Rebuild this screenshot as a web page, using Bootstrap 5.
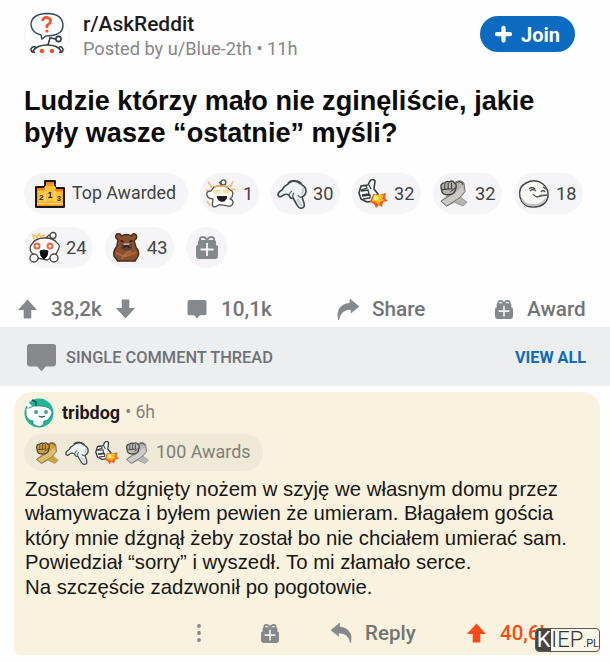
<!DOCTYPE html>
<html lang="pl">
<head>
<meta charset="utf-8">
<meta name="viewport" content="width=device-width, initial-scale=1">
<title>r/AskReddit</title>
<link href="https://cdn.jsdelivr.net/npm/bootstrap@5.3.0/dist/css/bootstrap.min.css" rel="stylesheet">
<style>
body{font-family:Roboto,"Liberation Sans",sans-serif;background:#fefefe;width:610px;height:662px;overflow:hidden;color:#222}
svg{display:block;flex:none;overflow:visible}
.ln{white-space:nowrap}
.post{height:327px;padding:12px 0 0 24px}
.who{margin-left:13px}
.sub-name{font-size:20.9px;line-height:25px;font-weight:500;color:#1c1c1c}
.meta{font-size:18.2px;line-height:24px;color:#858789}
.join{width:95px;height:36px;margin:4px 35px 0 0;padding-top:1px!important;background:#0a6bc1;color:#fff;font-size:20px;font-weight:700}
.title{font:700 27.1px/32px "Liberation Sans",Arial,sans-serif;color:#0b0b0b;margin:24px 0 0}
.awards{margin-top:24px;gap:13px 12px}
.pill{height:41px;background:#f5f5f7;font-size:18.2px;color:#414345;padding-left:6px}
.w-top{width:164px;font-size:17.8px;padding-left:11px;gap:7px}.w-one{width:59px}.w-std{width:69px}
.stats{font-size:20.7px;font-weight:500;color:#727577;height:32px;margin:26px 0 0 -6px}
.stats svg{color:#85898c;position:relative;top:-1px}
.thread{height:59px;background:#edeef0;padding:3px 24px 0 27px;font-size:16.4px;font-weight:500;color:#6f7173}
.view{color:#0d6cba;font-weight:700;font-size:16.2px}
.reply{width:586px;height:263px;margin:6px 0 0 14px;background:#f9f2df;border-radius:18px 18px 6px 6px;padding:4px 0 0 10px}
.user{font-size:18px;font-weight:700;color:#1a1a18;margin-left:8px}
.age{font-size:17.6px;color:#85837b;margin-left:5px}
.award-line{width:239px;height:37px;margin-top:5px;background:#efe9d8;font-size:17.95px;color:#817e76;padding-left:11px}
.story{font:20.38px/24.4px "Liberation Sans",Arial,sans-serif;color:#171714;margin:6px 0 0 1px}
.actions{height:32px;margin-top:18px;font-size:20.5px;font-weight:500;color:#73756f;padding-left:173px}
.score{color:#fb4a15}
.mark-box{left:535px;top:628px;width:65px;height:24px;border:1.5px solid #5b5a56;border-radius:4px;background:#faf6e9;overflow:hidden;font:300 22px/22px Roboto,sans-serif;color:#333}
.mark-k{width:17px;background:#454442;color:#fff;text-align:center;font-weight:400}
.mark-pl{font-size:11px;font-weight:400}
</style>
<script src="https://cdn.jsdelivr.net/npm/bootstrap@5.3.0/dist/js/bootstrap.bundle.min.js"></script>
</head>
<body>
<svg width="0" height="0" class="position-absolute" aria-hidden="true">
<defs>
<symbol id="up" viewBox="0 0 20 20"><path d="M10 0 20 11H14V20H6V11H0Z" fill="currentColor"/></symbol>
<symbol id="chat" viewBox="0 0 20 20"><path d="M2 0H18Q20 0 20 2V14Q20 16 18 16H13L10 19.500 7 16H2Q0 16 0 14V2Q0 0 2 0Z" fill="currentColor"/></symbol>
<symbol id="share" viewBox="0 0 22 21"><path d="M13 0 22 7.500 14 14V10.500Q4 10 1.500 21-2 6 13 4Z" fill="currentColor" stroke="currentColor" stroke-width=".6" stroke-linejoin="round"/></symbol>
<symbol id="gift" viewBox="0 0 22 23"><path d="M2 9V5.500Q2 4 4 4H18Q20 4 20 5.500V9Q22 9 22 11V20Q22 23 19 23H3Q0 23 0 20V11Q0 9 2 9Z" fill="currentColor"/><path d="M4.500 5Q3 1 6.500 1 10 1 11 5 12 1 15.500 1 19 1 17.500 5" fill="none" stroke="currentColor" stroke-width="2"/><path d="M11 7V20M4.500 13.500H17.500" stroke="#f3f3f1" stroke-width="2"/></symbol>
<symbol id="palm" viewBox="0 0 30 30"><path d="M11 5Q13 2 18 2 23 2 25 6 29 8 29 12 29 16 25 18L27 24Q28 29 25 29 22 30 20 26L16 19Q13 20 12 16 8 14 5 17 2 19 1 16 1 13 5 11 7 7 11 5Z" fill="#eef2f2" stroke="#3d4649" stroke-width="1.600" stroke-linejoin="round"/><path d="M11 4Q17 -1 24 5" fill="none" stroke="#3d4649" stroke-width="2"/><path d="M12 16Q13 13 15 12M16 19Q15 16 17 14M25 18Q22 19 21 16" fill="none" stroke="#59656a" stroke-width="1.300"/><path d="M20 20 25 27M26 9Q27 13 24 15" fill="none" stroke="#c5cfd0" stroke-width="2.200"/></symbol>
<symbol id="rocket" viewBox="0 0 30 30"><path d="M3 7 10 6 12 2Q15-1 17 2L16 10 20 15 16 22 9 23 3 20 1 14Z" fill="#f4f5f4" stroke="#353c3e" stroke-width="1.600" stroke-linejoin="round"/><path d="M3 7Q8 5 9 9L3 11M3 12 10 11 11 15 4 16M4 17 12 16 12 19 5 20M11 6 13 10" fill="none" stroke="#353c3e" stroke-width="1.300"/><path d="M15 15 21 16 28 14 27 19 30 22 25 23 24 28 21 26 18 29 16 25 12 23Z" fill="#f25a1c"/><path d="M16 16 26 16 24 20 27 21 22 23 21 26 18 23 14 22Z" fill="#ffbd21"/><circle cx="18" cy="19" r="2.500" fill="#fff07a"/></symbol>
<symbol id="hands" viewBox="0 0 30 30"><path d="M2 23 9 17 20 17 29 24 25 28 16 24 8 28Z" fill="currentColor" stroke="#8a8780" stroke-width=".8"/><path d="M17 3Q24 0 26 5L27 13 22 19 8 28 2 23 13 16Z" fill="currentColor" stroke="#77746e" stroke-width="1"/><path d="M3 23 16 15 24 8 26 13 20 20 8 27Z" fill="#fff" fill-opacity=".3"/><path d="M2 8Q2 4 6 4 8 2 11 3 14 1 16 4 19 5 17 11 16 16 11 16 4 17 3 13Z" fill="currentColor" stroke="#45433f" stroke-width="1.500"/><path d="M6 5V11M9.500 4V11M13 4V10M3 11 14 10M12 13 17 9M18 4Q23 1 25 6" fill="none" stroke="#45433f" stroke-width="1.100"/></symbol>
<symbol id="podium" viewBox="0 0 30 28"><path d="M1 7H10V1H20V8H29V27H1Z" fill="#f79b20" stroke="#171819" stroke-width="2" stroke-linejoin="round"/><path d="M3 11H10V6H20V12H27V22H3Z" fill="#ffc03c"/><path d="M2 23.500H28M10 7V22M20 7V22" stroke="#ffd96b" stroke-width="1.500"/><path d="M2 9H10M11 3H19M20 10H28" stroke="#f2811e" stroke-width="2"/><g font-family="Liberation Sans" font-weight="700" fill="#292722"><text x="12.500" y="18" font-size="9">1</text><text x="4" y="20" font-size="8">2</text><text x="22" y="21" font-size="7">3</text></g></symbol>
</defs></svg>

<section class="post">
 <header class="d-flex align-items-start">
  <svg width="46" height="46" viewBox="0 0 46 46"><circle cx="23" cy="23" r="22.500" fill="#fff" stroke="#ededed" stroke-width=".8"/><path d="M17 23 18 27 22 24Q39 24 39 13 38 1.500 23 1.500 7 2 7 13 8 21 17 23Z" fill="#fff" stroke="#354d60" stroke-width="1.500"/><path d="M18.500 9Q19 5 23.500 5.500 28 7 26 11L23 13.500V16" fill="none" stroke="#fb4d27" stroke-width="2.700"/><circle cx="23" cy="19" r="1.600" fill="#fb4d27"/><path d="M24 33 26 26 32 27M9 39Q13 33 23 33 34 33 37 39M11 40Q7 41 7 37 9 33 13 36M34 36Q37 33 39 37 39 41 35 40" fill="none" stroke="#343c40" stroke-width="1.600"/><circle cx="34.500" cy="27" r="2.600" fill="none" stroke="#343c40" stroke-width="1.600"/><circle cx="18" cy="39" r="2.200" fill="#fb4d27"/><circle cx="28" cy="39" r="2.200" fill="#fb4d27"/></svg>
  <div class="who ln"><div class="sub-name">r/AskReddit</div><div class="meta">Posted by u/Blue-2th • 11h</div></div>
  <button class="join btn rounded-pill ms-auto p-0 d-flex align-items-center justify-content-center gap-2"><svg width="18" height="18" viewBox="0 0 18 18"><path d="M8.500 2V14.500M2 8.200H15" stroke="#fff" stroke-width="4.300" stroke-linecap="round"/></svg><span>Join</span></button>
 </header>
 <h1 class="title ln">Ludzie którzy mało nie zginęliście, jakie<br>były wasze “ostatnie” myśli?</h1>
 <div class="awards d-flex flex-wrap">
  <div class="pill w-top rounded-pill d-flex align-items-center"><svg width="30" height="28"><use href="#podium"/></svg><span class="ln">Top Awarded</span></div>
  <div class="pill w-one rounded-pill d-flex align-items-center gap-2"><svg width="29" height="30" viewBox="0 0 30 30"><path d="M2 2 6 8M28 2 25 8M0 11 5 12M30 10 25 11M1 22 4 27" stroke="#f7bd76" stroke-width="1.800"/><path d="M5 12Q0 12 1 16 2 20 7 20L7 23Q5 29 10 28L14 26 21 27Q27 29 28 24 28 21 25 20L27 18Q29 12 25 11L22 8Q15 5 8 8Z" fill="#fff" stroke="#555" stroke-width="1.400"/><path d="M16 6 14 3 17 1" fill="none" stroke="#555" stroke-width="1.400"/><circle cx="18" cy="3" r="2.600" fill="#eee" stroke="#555" stroke-width="1.400"/><path d="M8 8Q15 5 23 8" stroke="#f4ae53" stroke-width="1.800" fill="none"/><path d="M7 11 15 10 15 14 8 15ZM17 10 25 11 24 15 18 14Z" fill="#ffe09a"/><path d="M11 17H22Q21 23 17 23 12 23 11 17Z" fill="#201c19"/></svg><span>1</span></div>
  <div class="pill w-std rounded-pill d-flex align-items-center"><svg width="30" height="30"><use href="#palm"/></svg><span style="margin-left:6px">30</span></div>
  <div class="pill w-std rounded-pill d-flex align-items-center"><svg width="30" height="30"><use href="#rocket"/></svg><span style="margin-left:6px">32</span></div>
  <div class="pill w-std rounded-pill d-flex align-items-center"><svg width="29" height="29" style="color:#b4b3b1"><use href="#hands"/></svg><span style="margin-left:7px">32</span></div>
  <div class="pill w-std rounded-pill d-flex align-items-center ps-1"><svg width="31" height="28" viewBox="0 0 31 28"><path d="M2 17Q0 7 8 3 17-2 25 4 31 9 30 17 28 26 17 27 5 28 2 17Z" fill="#f8f8f6" stroke="#454644" stroke-width="1.500"/><path d="M11 9Q14 6 17 9M25 7 28 9M12 11Q15 8 18 11M15 14Q18 19 24 15M21 16 29 15M23 12Q25 9 27 12" fill="none" stroke="#4b4d4a" stroke-width="1.400"/><path d="M4 19Q7 26 17 25 26 24 28 18" fill="none" stroke="#c4c5c2" stroke-width="2"/></svg><span style="margin-left:7px">18</span></div>
  <div class="pill w-std rounded-pill d-flex align-items-center" style="padding-left:5px"><svg width="31" height="31" viewBox="0 0 31 31"><path d="M5 7 4 3 8 5 10 2 12 5 16 3" fill="none" stroke="#f8c463" stroke-width="2"/><path d="M17 6 20 3 23 4M3 12Q6 6 16 6 25 6 28 11 32 13 29 18L26 24 18 28 8 26 2 20Q0 15 3 12Z" fill="#fff" stroke="#4a4a49" stroke-width="1.300"/><g fill="#fff" stroke="#4a4a49" stroke-width="1.400"><circle cx="24" cy="3.500" r="3"/><circle cx="5" cy="26" r="4"/><circle cx="25" cy="26" r="4"/></g><circle cx="8" cy="14" r="2.500" fill="#fff" stroke="#e76442" stroke-width="2"/><circle cx="21" cy="14" r="2.500" fill="#fff" stroke="#e76442" stroke-width="2"/><path d="M11 19Q15 17 19 19L18 24 15 27 12 24Z" fill="#111" stroke="#111"/></svg><span style="margin-left:6px">24</span></div>
  <div class="pill w-std rounded-pill d-flex align-items-center" style="padding-left:8px"><svg width="26" height="29" viewBox="0 0 27 30"><path d="M5 7Q1 4 4 1 8 0 9 3 14 0 19 3 21-1 24 2 26 5 22 8L24 15Q28 19 26 24L23 29H5L1 24Q0 18 4 14Z" fill="#88502f" stroke="#44291e" stroke-width="1.400"/><path d="M9 12Q14 8 19 12L20 16Q14 20 8 16Z" fill="#5b3f30"/><path d="M8 8 11 9M17 9 20 8M11 15Q14 12 17 15" stroke="#221b18" stroke-width="1.500" fill="none"/><path d="M11 11.500H17" stroke="#b7b1a8" stroke-width="1.800"/><path d="M3 20Q8 24 14 24L24 20M9 27Q13 20 19 19" stroke="#b56b3d" stroke-width="1.800" fill="none"/></svg><span style="margin-left:8px">43</span></div>
  <div class="pill rounded-circle d-flex align-items-center justify-content-center p-0" style="width:41px;color:#85898c"><svg width="22" height="23"><use href="#gift"/></svg></div>
 </div>
 <div class="stats d-flex align-items-center ln">
  <svg width="19" height="20"><use href="#up"/></svg><span style="margin-left:14px;width:65px">38,2k</span>
  <svg width="19" height="20" style="transform:rotate(180deg)"><use href="#up"/></svg>
  <svg width="20" height="19" style="margin-left:52px"><use href="#chat"/></svg><span style="margin-left:14px;width:116px">10,1k</span>
  <svg width="22" height="21"><use href="#share"/></svg><span style="margin-left:13px;width:123px">Share</span>
  <svg width="18" height="19"><use href="#gift"/></svg><span style="margin-left:14px">Award</span>
 </div>
</section>
<section class="thread d-flex align-items-center ln">
 <svg width="29" height="28" viewBox="0 0 20 20" preserveAspectRatio="none" style="color:#85898c"><use href="#chat"/></svg><span style="margin-left:10px">SINGLE COMMENT THREAD</span><span class="view ms-auto">VIEW ALL</span>
</section>
<article class="reply">
 <div class="d-flex align-items-center ln" style="height:33px">
  <svg width="30" height="30" viewBox="0 0 30 30"><circle cx="15" cy="15" r="14.500" fill="#20b69b"/><path d="M2 13Q1 9 5 10 9 7 15 8 23 8 26 11 30 14 26 19 24 23 20 23L19 27 15 29 9 26 9 23Q3 22 2 17Z" fill="#fff" stroke="#267f78" stroke-width=".8"/><path d="M8 2 12 4 12 8M15 18Q18 20 21 18" fill="none" stroke="#214c4b" stroke-width="1.400"/><circle cx="12" cy="14" r="2" fill="#39a88e"/><circle cx="22" cy="14" r="2" fill="#39a88e"/><path d="M1 5 4 4 8 8 4 10Z" fill="#fff"/></svg>
  <span class="user">tribdog</span><span class="age">• 6h</span>
 </div>
 <div class="award-line rounded-pill d-flex align-items-center ln">
  <svg width="24" height="24" style="color:#d5a02d;margin-right:6px"><use href="#hands"/></svg><svg width="24" height="24" style="margin-right:6px"><use href="#palm"/></svg><svg width="24" height="24" style="margin-right:6px"><use href="#rocket"/></svg><svg width="24" height="24" style="color:#b9b8b4"><use href="#hands"/></svg><span style="margin-left:7px">100 Awards</span>
 </div>
 <p class="story ln">Zostałem dźgnięty nożem w szyję we własnym domu przez<br>włamywacza i byłem pewien że umieram. Błagałem gościa<br>który mnie dźgnął żeby został bo nie chciałem umierać sam.<br>Powiedział “sorry” i wyszedł. To mi złamało serce.<br>Na szczęście zadzwonił po pogotowie.</p>
 <div class="actions d-flex align-items-center ln">
  <svg width="4" height="18" viewBox="0 0 4 18" fill="#85898a"><circle cx="2" cy="2" r="1.900"/><circle cx="2" cy="9" r="1.900"/><circle cx="2" cy="16" r="1.900"/></svg>
  <svg width="18" height="19" style="margin-left:60px;color:#85898a"><use href="#gift"/></svg>
  <svg width="21" height="20" style="margin-left:52px;transform:scaleX(-1);color:#85898a"><use href="#share"/></svg><span style="margin-left:13px;width:102px">Reply</span>
  <svg width="19" height="20" class="score"><use href="#up"/></svg><span class="score" style="margin-left:14px">40,6k</span>
 </div>
</article>
<div class="mark-box position-absolute d-flex ln"><span class="mark-k">K</span><span>IEP<span class="mark-pl">.PL</span></span></div>
</body>
</html>
